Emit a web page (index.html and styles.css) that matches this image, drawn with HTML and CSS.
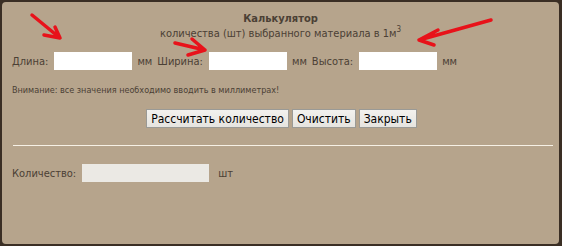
FILE: index.html
```html
<!DOCTYPE html>
<html lang="ru">
<head>
<meta charset="utf-8">
<title>Калькулятор</title>
<link rel="stylesheet" href="styles.css">
</head>
<body>
<div class="panel">
  <div class="title">Калькулятор</div>
  <div class="subtitle">количества (шт) выбранного материала в 1м<sup>3</sup></div>
  <div class="dims">
    <span class="lbl">Длина:</span><input class="field" type="text"><span class="unit">мм</span>
    <span class="lbl">Ширина:</span><input class="field" type="text"><span class="unit">мм</span>
    <span class="lbl">Высота:</span><input class="field" type="text"><span class="unit">мм</span>
  </div>
  <div class="note">Внимание: все значения необходимо вводить в миллиметрах!</div>
  <div class="buttons">
    <button class="btn btn-calc">Рассчитать количество</button>
    <button class="btn btn-clear">Очистить</button>
    <button class="btn btn-close">Закрыть</button>
  </div>
  <div class="rule"></div>
  <div class="result">
    <span class="lbl">Количество:</span><input class="field result-field" type="text"><span class="unit">шт</span>
  </div>
</div>
<svg class="arrows" width="562" height="246" viewBox="0 0 562 246">
  <g fill="none" stroke="#e8121a" stroke-width="3.5" stroke-linecap="round" stroke-linejoin="round">
    <path d="M32 15 L60 38 M55 27 L60 38 L44 35"/>
    <path d="M175 43 L205 50 M192 39 L205 50 L188 55"/>
    <path d="M491 20 L419 40 M438 30 L419 40 L434 45"/>
  </g>
</svg>
</body>
</html>
```
FILE: styles.css
```css
html, body {
  margin: 0;
  padding: 0;
}
body {
  width: 562px;
  height: 246px;
  background: #3a2e24;
  position: relative;
  overflow: hidden;
  font-family: "DejaVu Sans Condensed", "DejaVu Sans", sans-serif;
  font-size: 11px;
  color: #4b4035;
}
.panel {
  box-sizing: border-box;
  margin: 2px 0 0 2px;
  width: 557px;
  height: 242px;
  background: #b6a48c;
  border-radius: 4px;
  padding: 10px 8px 0 8px;
}
.title {
  text-align: center;
  font-weight: bold;
  line-height: 14px;
}
.subtitle {
  text-align: center;
  line-height: 14px;
  margin-top: 1px;
}
.subtitle sup {
  font-size: 8px;
  line-height: 0;
  vertical-align: 5px;
}
.dims, .result {
  display: flex;
  align-items: center;
  height: 18px;
}
.dims {
  margin-top: 11px;
}
.lbl {
  margin-left: 2px;
  margin-right: 6px;
}
.field {
  box-sizing: border-box;
  width: 78px;
  height: 18px;
  border: none;
  background: #ffffff;
  padding: 0;
  margin: 0;
}
.unit {
  margin-left: 5px;
  margin-right: 3px;
}
.note {
  margin-top: 14px;
  margin-left: 2px;
  font-size: 9px;
  line-height: 12px;
}
.buttons {
  display: flex;
  justify-content: center;
  gap: 3px;
  margin-top: 13px;
  padding-left: 2px;
}
.btn {
  box-sizing: border-box;
  height: 19px;
  padding: 0 4px;
  font-family: "DejaVu Sans Condensed", "DejaVu Sans", sans-serif;
  font-size: 12px;
  color: #000;
  background: linear-gradient(#f2f1ee, #e6e4df);
  border: 1px solid #9a9a96;
  border-radius: 0;
  line-height: 16px;
}
.rule {
  margin: 17px 0 0 3px;
  width: 540px;
  height: 1px;
  background: #f6f0e5;
}
.result {
  margin-top: 18px;
}
.result .lbl {
  margin-right: 6px;
}
.result-field {
  width: 127px;
  background: #ebe9e4;
}
.result .unit {
  margin-left: 9px;
}
.arrows {
  position: absolute;
  left: 0;
  top: 0;
  pointer-events: none;
}
```
